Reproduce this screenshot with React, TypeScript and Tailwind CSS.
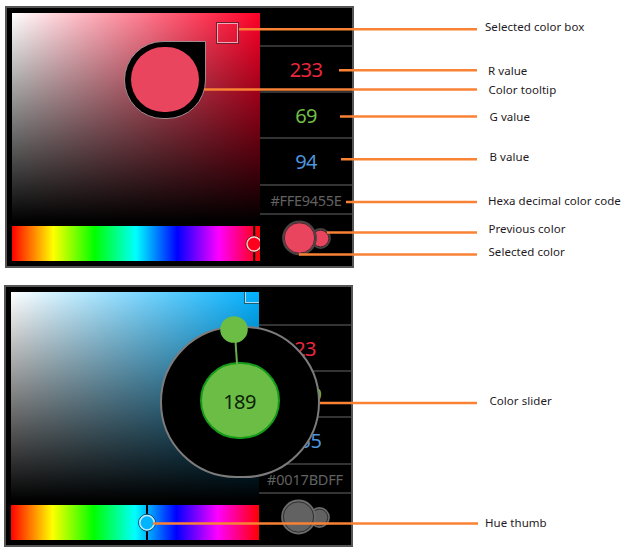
import { ReactNode } from 'react';

type PanelProps = {
  palette: string;
  r: string;
  g: string;
  b: string;
  hex: string;
  hexClass: string;
  selector: ReactNode;
  hueThumb: ReactNode;
  swatch: string;
  swatchRing: string;
  children?: ReactNode;
};

function Value({ text, className }: { text: string; className: string }) {
  return (
    <div className="flex h-[46.4px] items-center justify-center border-b-2 border-[#333] text-[20px] leading-none tracking-[-0.6px]">
      <span className={`relative top-px ${className}`}>{text}</span>
    </div>
  );
}

function Panel(p: PanelProps) {
  return (
    <section className="relative flex h-[262px] w-[349px] border-2 border-[#555] bg-black pt-[5px] pl-[5px]">
      <div className="flex w-[248px] shrink-0 flex-col overflow-hidden">
        <div className={`relative h-[209px] overflow-hidden ${p.palette}`}>
          <div className="h-full bg-linear-to-b from-transparent to-black" />
          {p.selector}
        </div>
        <div className="relative mt-[4px] h-[35px] overflow-hidden bg-[linear-gradient(to_right,#f00,#ff0,#0f0,#0ff,#00f,#f0f,#f00)]">
          {p.hueThumb}
        </div>
      </div>
      <div className="-mt-[5px] flex min-w-0 flex-1 flex-col">
        <div className="h-[38.5px] border-b-2 border-[#333]" />
        <Value text={p.r} className="text-[#e8283c]" />
        <Value text={p.g} className="text-[#6fbf45]" />
        <Value text={p.b} className="text-[#4d94dc]" />
        <div className={`flex h-[29.5px] items-center justify-center border-b-2 border-[#333] leading-none whitespace-nowrap text-[#626262] ${p.hexClass}`}>
          <span className="relative top-px">{p.hex}</span>
        </div>
        <div className="flex flex-1 justify-center">
          <svg width="60" height="44" viewBox="0 0 60 44">
            <circle cx="44.5" cy="23.5" r="9.5" fill={p.swatch} stroke={p.swatchRing} strokeWidth="1.8" />
            <circle cx="44.5" cy="23.5" r="8.3" fill="none" stroke="#222" strokeWidth="0.8" />
            <circle cx="23.5" cy="23" r="16.5" fill={p.swatch} stroke={p.swatchRing} strokeWidth="1.8" />
            <circle cx="23.5" cy="23" r="15.2" fill="none" stroke="#222" strokeWidth="0.8" />
          </svg>
        </div>
      </div>
      {p.children}
    </section>
  );
}

const labels = [
  ['mt-[20px] pl-[1px]', 'Selected color box'],
  ['mt-[30px] pl-[4px]', 'R value'],
  ['mt-[5px] pl-[4.5px]', 'Color tooltip'],
  ['mt-[13px] pl-[5.5px]', 'G value'],
  ['mt-[26px] pl-[5.5px]', 'B value'],
  ['mt-[30px] pl-[4px]', 'Hexa decimal color code'],
  ['mt-[14px] pl-[4.5px]', 'Previous color'],
  ['mt-[9px] pl-[4.5px]', 'Selected color'],
  ['mt-[135px] pl-[5.5px]', 'Color slider'],
  ['mt-[108px] pl-[1px]', 'Hue thumb'],
];

const callouts = [
  [239, 29.3, 477],
  [339, 70.3, 477],
  [204, 89.5, 477],
  [340, 116.5, 477],
  [341, 159.3, 477],
  [346, 202, 477],
  [327, 232.5, 477],
  [299, 254.4, 477],
  [320, 403, 477],
  [153, 523.4, 478],
];

export default function App() {
  return (
    <main className="relative flex h-[550px] w-[624px] overflow-hidden bg-white font-['Noto_Sans','Open_Sans',sans-serif]">
      <div className="w-[484px] shrink-0">
        <div className="pt-[6px] pl-[5px]">
          <Panel
            palette="bg-[linear-gradient(to_right,#fff,#ff0027)]"
            r="233" g="69" b="94" hex="#FFE9455E"
            hexClass="text-[14.5px] tracking-[-0.3px]"
            swatch="#e9455e" swatchRing="#484343"
            selector={<div className="absolute top-[8.5px] left-[204px] h-[22px] w-[23px] border border-[#69222f]"><div className="h-full w-full border border-[#f5a6b4]" /></div>}
            hueThumb={
              <svg className="absolute inset-0" width="249" height="35">
                <path d="M242.2 0V35" stroke="#000" strokeWidth="2" />
                <circle cx="242" cy="18" r="8" fill="#ff001c" stroke="#61101c" />
                <circle cx="242" cy="18" r="7" fill="none" stroke="#ffd0d0" strokeWidth="1.4" />
              </svg>
            }
          >
            <div className="absolute top-[32.5px] left-[116.5px] flex h-[78px] w-[82.5px] items-center justify-center rounded-full rounded-tr-none border border-[#a08a90] bg-black">
              <div className="h-[65px] w-[68px] rounded-full bg-[#e9455e]" />
            </div>
          </Panel>
        </div>
        <div className="pt-[17px] pl-[4px]">
          <Panel
            palette="bg-[linear-gradient(to_right,#fff,#00b0ff)]"
            r="23" g="189" b="255" hex="#0017BDFF"
            hexClass="text-[14.5px] tracking-[-0.2px]"
            swatch="#626262" swatchRing="#6b6b6b"
            selector={<div className="absolute -top-[10px] left-[233px] h-[22px] w-[23px] border border-[#245b75]"><div className="h-full w-full border border-[#a5dcf8]" /></div>}
            hueThumb={
              <svg className="absolute inset-0" width="249" height="35">
                <path d="M136 0V35" stroke="#000" strokeWidth="2" />
                <circle cx="136" cy="17.7" r="8.4" fill="#00b4ff" stroke="#07435e" />
                <circle cx="136" cy="17.7" r="7.2" fill="none" stroke="#bcecff" strokeWidth="1.5" />
              </svg>
            }
          >
            <div className="absolute top-[38.5px] left-[154px] flex h-[152px] w-[160px] items-center justify-center rounded-full border-2 border-[#7d7b7b] bg-black">
              <div className="relative -top-[1px] -left-[0.5px] flex h-[77px] w-[80px] items-center justify-center rounded-full border-2 border-[#159b17] bg-[#6bbd46] text-[20px] leading-none tracking-[-0.6px] text-[#0b2207]">
                <span className="relative top-px">189</span>
              </div>
              <svg className="absolute -top-[14px] left-[56px]" width="34" height="54">
                <path d="M17.5 27L19 50" stroke="#6bae48" strokeWidth="2" />
                <ellipse cx="16" cy="15.5" rx="13.8" ry="13.3" fill="#6bbd46" />
              </svg>
            </div>
          </Panel>
        </div>
      </div>
      <div className="flex flex-1 flex-col text-[11.5px] leading-[14px] tracking-[0.05px] whitespace-nowrap text-[#1f1a24]">
        {labels.map(([place, text]) => (
          <span key={text} className={place}>{text}</span>
        ))}
      </div>
      <svg className="pointer-events-none absolute inset-0" width="624" height="550">
        {callouts.map(([x1, y, x2]) => (
          <path key={y} d={`M${x1} ${y}H${x2}`} stroke="#f98235" strokeWidth="2.5" />
        ))}
      </svg>
    </main>
  );
}
